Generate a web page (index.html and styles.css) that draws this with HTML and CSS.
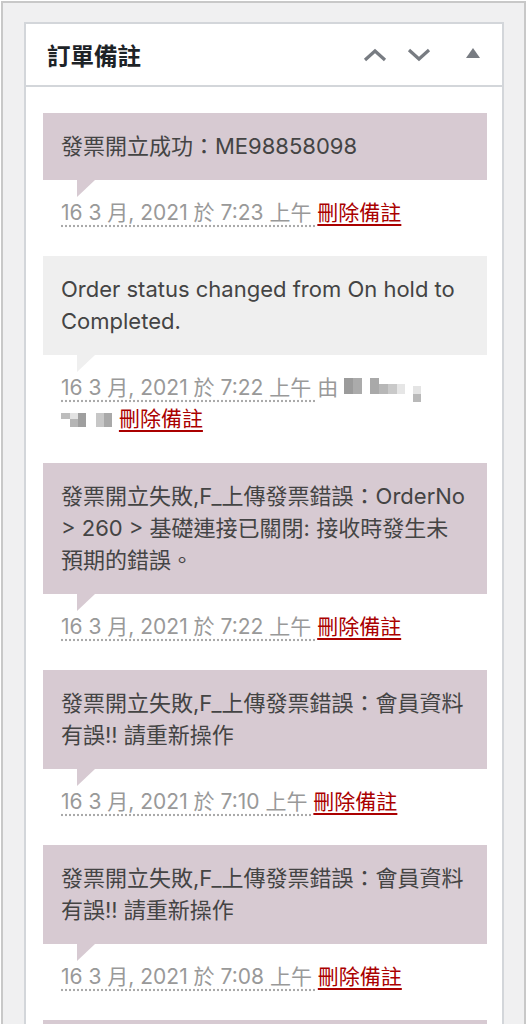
FILE: index.html
```html
<!DOCTYPE html>
<html lang="zh-Hant">
<head>
    <meta charset="UTF-8">
    <meta name="viewport" content="width=device-width, initial-scale=1.0">
    <title>訂單備註</title>
    <link rel="stylesheet" href="styles.css">
</head>
<body>
    <div class="frame">
        <div class="postbox">
            <div class="postbox-header">
                <h2 class="hndle">訂單備註</h2>
                <div class="handle-actions">
                    <button class="handle-btn" aria-label="上移">
                        <svg width="24" height="14" viewBox="0 0 24 14"><polyline points="2,12 12,3 22,12" fill="none" stroke="#787c82" stroke-width="3.2"/></svg>
                    </button>
                    <button class="handle-btn" aria-label="下移">
                        <svg width="24" height="14" viewBox="0 0 24 14"><polyline points="2,2 12,11 22,2" fill="none" stroke="#787c82" stroke-width="3.2"/></svg>
                    </button>
                    <button class="handle-btn toggle" aria-label="收合">
                        <svg width="14" height="10" viewBox="0 0 14 10"><polygon points="7,0 14,10 0,10" fill="#787c82"/></svg>
                    </button>
                </div>
            </div>

            <div class="inside">
                <ul class="order-notes">
                    <li class="note system-note">
                        <div class="note-content"><p>發票開立成功：ME98858098</p></div>
                        <p class="meta"><abbr class="exact-date">16 3 月, 2021 於 7:23 上午 </abbr><a href="#" class="delete-note">刪除備註</a></p>
                    </li>

                    <li class="note">
                        <div class="note-content"><p>Order status changed from On hold to Completed.</p></div>
                        <p class="meta"><abbr class="exact-date">16 3 月, 2021 於 7:22 上午 </abbr>由 <svg class="redacted" width="80" height="30" viewBox="0 0 80 30"><rect x="0" y="4" width="9" height="16" fill="#9b9b9b"/><rect x="9" y="4" width="9" height="16" fill="#ababab"/><rect x="26" y="4" width="9" height="16" fill="#a9a9a9"/><rect x="35" y="10" width="9" height="10" fill="#b7b7b7"/><rect x="44" y="10" width="9" height="10" fill="#c9c9c9"/><rect x="53" y="10" width="8" height="10" fill="#e6e6e6"/><rect x="69" y="12" width="8" height="8" fill="#e4e4e4"/><rect x="69" y="20" width="8" height="8" fill="#b9b9b9"/></svg> <svg class="redacted" width="52" height="30" viewBox="0 0 52 30"><rect x="0" y="8" width="9" height="6" fill="#bdbdbd"/><rect x="9" y="8" width="8" height="6" fill="#e2e2e2"/><rect x="9" y="14" width="8" height="8" fill="#b5b5b5"/><rect x="17" y="8" width="8" height="14" fill="#9f9f9f"/><rect x="35" y="8" width="8" height="14" fill="#c7c7c7"/><rect x="43" y="8" width="8" height="14" fill="#a9a9a9"/></svg> <a href="#" class="delete-note">刪除備註</a></p>
                    </li>

                    <li class="note system-note">
                        <div class="note-content"><p>發票開立失敗,F_上傳發票錯誤：OrderNo &gt; 260 &gt; 基礎連接已關閉: 接收時發生未預期的錯誤。</p></div>
                        <p class="meta"><abbr class="exact-date">16 3 月, 2021 於 7:22 上午 </abbr><a href="#" class="delete-note">刪除備註</a></p>
                    </li>

                    <li class="note system-note">
                        <div class="note-content"><p>發票開立失敗,F_上傳發票錯誤：會員資料有誤!! 請重新操作</p></div>
                        <p class="meta"><abbr class="exact-date">16 3 月, 2021 於 7:10 上午 </abbr><a href="#" class="delete-note">刪除備註</a></p>
                    </li>

                    <li class="note system-note">
                        <div class="note-content"><p>發票開立失敗,F_上傳發票錯誤：會員資料有誤!! 請重新操作</p></div>
                        <p class="meta"><abbr class="exact-date">16 3 月, 2021 於 7:08 上午 </abbr><a href="#" class="delete-note">刪除備註</a></p>
                    </li>

                    <li class="note system-note">
                        <div class="note-content"></div>
                    </li>
                </ul>
            </div>
        </div>
    </div>
</body>
</html>
```

FILE: styles.css
```css
body {
  margin: 0;
  background: #fff;
  font-family: Inter, "Noto Sans CJK TC", sans-serif;
}

.frame {
  margin: 1px 3px 0 1px;
  height: 1017px;
  border: 2px solid #c8c8c8;
  background: #f0f0f1;
  padding: 19px 20px 0 21px;
  overflow: hidden;
}

.postbox {
  background: #fff;
  border: 2px solid #d3d6da;
  border-bottom: none;
  min-height: 1100px;
}

.postbox-header {
  display: flex;
  align-items: center;
  justify-content: space-between;
  height: 61px;
  border-bottom: 2px solid #d3d6da;
  padding: 0 11px 0 21px;
}

.hndle {
  margin: 0;
  font-size: 23.5px;
  font-weight: 700;
  color: #1d2327;
}

.handle-actions {
  display: flex;
  align-items: center;
}

.handle-btn {
  display: flex;
  align-items: center;
  justify-content: center;
  width: 44px;
  height: 40px;
  padding: 0;
  border: none;
  background: none;
  cursor: pointer;
}

.handle-btn.toggle {
  width: 36px;
  margin-left: 14px;
  padding-bottom: 4px;
}

.inside {
  padding: 26px 15px 0 17px;
}

.order-notes {
  list-style: none;
  margin: 0;
  padding: 0;
}

.note-content {
  position: relative;
  min-height: 30px;
  background: #efefef;
  padding: 17px 18px 18px;
  color: #444;
  font-size: 22px;
  line-height: 32px;
}

.note-content p {
  margin: 0;
}

.note-content::after {
  content: "";
  position: absolute;
  top: 100%;
  left: 34px;
  border-style: solid;
  border-width: 17px 18px 0 0;
  border-color: #efefef transparent transparent transparent;
}

.system-note .note-content {
  background: #d7cad2;
}

.system-note .note-content::after {
  border-top-color: #d7cad2;
}

.meta {
  margin: 0;
  padding: 18px 18px 28px;
  color: #999;
  font-size: 21px;
  line-height: 30px;
}

.exact-date {
  text-decoration: underline dotted #aaa;
  text-underline-offset: 5px;
}

.redacted {
  vertical-align: -9px;
}

.delete-note {
  color: #a00;
  text-decoration: underline;
  text-underline-offset: 4px;
}
```
